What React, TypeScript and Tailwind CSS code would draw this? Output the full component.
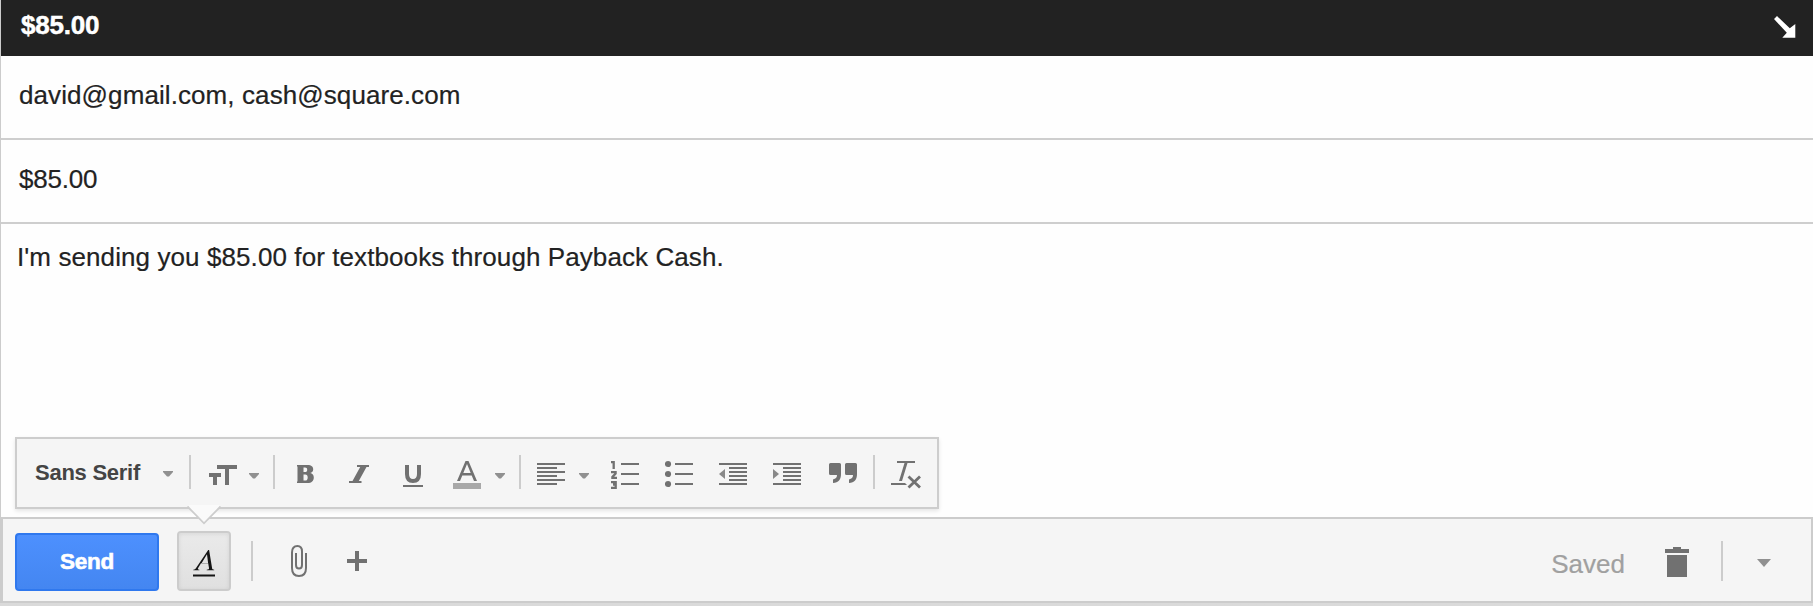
import type { ReactNode } from "react";

const INK = "#717171";

function Icon({ w, className, children }: { w: number; className: string; children: ReactNode }) {
  return (
    <svg width={w} height={34} viewBox={`0 0 ${w} 34`} className={`shrink-0 ${className}`} fill={INK}>
      {children}
    </svg>
  );
}

function Caret({ className, raised = false }: { className: string; raised?: boolean }) {
  return (
    <Icon w={10} className={className}>
      <path d={raised ? "M0 16h10v1l-4 4.500h-2L0 17z" : "M0 18h10v1l-4 4.500h-2L0 19z"} fill="#909090" />
    </Icon>
  );
}

function Rule({ className }: { className: string }) {
  return <span className={`block w-[2px] shrink-0 bg-[#cccccc] ${className}`} />;
}

function FormatBar() {
  return (
    <div className="relative ml-[14px] flex h-[72px] w-[924px] items-start border-2 border-[#cdcdcd] bg-[#f5f5f5] pt-[16px] shadow-[0_2px_4px_rgba(0,0,0,0.1)]">
      <span className="ml-[18px] mt-[1px] w-[106px] shrink-0 whitespace-nowrap text-[22px] font-bold leading-[34px] tracking-[-0.26px] text-[#444444]">
        Sans Serif
      </span>
      <Caret className="ml-[22px]" raised />
      <Rule className="ml-[16px] h-[34px]" />
      <Icon w={28} className="ml-[18px]">
        <path d="M8 10h20v4h-8v16h-4V14H8zM0 18h12v4H8v8H4v-8H0z" />
      </Icon>
      <Caret className="ml-[12px]" />
      <Rule className="ml-[14px] h-[34px]" />
      <Icon w={17} className="ml-[22px]">
        <path fillRule="evenodd" d="M0 10h10.500C14.500 10 16.200 11.700 16.200 14.200c0 2-1.200 3.400-3 3.900 2.200.500 3.600 2 3.600 4.400 0 3.500-2.200 5.500-6.200 5.500H0v-1.600h.500V11.600H0zM6.500 12.400v4.600h1.500c1.500 0 2.200-.800 2.200-2.300s-.700-2.300-2.200-2.300zM6.500 19.400v6.200h1.700c1.700 0 2.500-1 2.500-3.100s-.800-3.100-2.500-3.100z" />
      </Icon>
      <Icon w={20} className="ml-[35px]">
        <path d="M8 10H20v2h-2.500L9.800 26h2.700v2H0v-2h3.500l7.700-14H8z" />
      </Icon>
      <Icon w={20} className="ml-[34px]">
        <path d="M4 10v9c0 4.500 2 7 6 7s6-2.500 6-7v-9" fill="none" stroke={INK} strokeWidth="4" />
        <path d="M0 30h20v2H0z" />
      </Icon>
      <Icon w={28} className="ml-[30px]">
        <path fillRule="evenodd" d="M12.500 6h3L24 26h-3l-2.300-5.500H9.300L7 26H4zM14 9l-3.700 9h7.400z" />
        <path d="M0 28h28v6H0z" fill="#a8a8a8" />
      </Icon>
      <Caret className="ml-[14px]" />
      <Rule className="ml-[14px] h-[34px]" />
      <Icon w={28} className="ml-[16px]">
        <path d="M0 8h28v2H0zM0 12h20v2H0zM0 16h28v2H0zM0 20h20v2H0zM0 24h28v2H0zM0 28h20v2H0z" />
      </Icon>
      <Caret className="ml-[14px]" />
      <Icon w={28} className="ml-[22px]">
        <path d="M10 8h18v2H10zM10 18h18v2H10zM10 28h18v2H10z" />
        <path d="M0 7.200h2.700V14M0 17.200h4.600v1.300L1.400 21.900v.900H6M0 27.200h4.700v2.300H2h2.700v3.300H0" fill="none" stroke={INK} strokeWidth="2.300" />
      </Icon>
      <Icon w={28} className="ml-[26px]">
        <circle cx="3" cy="9" r="3.100" />
        <circle cx="3" cy="19" r="3.100" />
        <circle cx="3" cy="29" r="3.100" />
        <path d="M10 8h18v2H10zM10 18h18v2H10zM10 28h18v2H10z" />
      </Icon>
      <Icon w={28} className="ml-[26px]">
        <path d="M0 8h28v2H0zM10 12h18v2H10zM10 16h18v2H10zM10 20h18v2H10zM10 24h18v2H10zM0 28h28v2H0z" />
        <path d="M6 14v10l-6-5z" fill="#888888" />
      </Icon>
      <Icon w={28} className="ml-[26px]">
        <path d="M0 8h28v2H0zM10 12h18v2H10zM10 16h18v2H10zM10 20h18v2H10zM10 24h18v2H10zM0 28h28v2H0z" />
        <path d="M0 14v10l6-5z" fill="#888888" />
      </Icon>
      <Icon w={28} className="ml-[28px]">
        <path d="M1.500 8h9Q12 8 12 9.500V19c0 5.500-2.500 9-8 9v-3.600c2.700-.500 4-2 4-4.400H1.500Q0 20 0 18.500v-9Q0 8 1.500 8z" />
        <path d="M17.500 8h9Q28 8 28 9.500V19c0 5.500-2.500 9-8 9v-3.600c2.700-.500 4-2 4-4.400h-6.500Q16 20 16 18.500v-9Q16 8 17.500 8z" />
      </Icon>
      <Rule className="ml-[16px] h-[34px]" />
      <Icon w={31} className="ml-[16px]">
        <path d="M6 6h18v2H6zM0 28h14l2 2H0zM13.500 8h3L11 26H8z" />
        <path d="M17.500 21.500l11.500 11M29 21.500l-11.500 11" fill="none" stroke={INK} strokeWidth="2.800" />
      </Icon>
      <svg width="34" height="20" viewBox="0 0 34 20" className="absolute left-[170px] top-[66px] z-10">
        <path d="M1 0h32v2L17 19 1 2z" fill="#fafafa" />
        <path d="M0.500 1.500L17 18.300 33.500 1.500" fill="none" stroke="#cdcdcd" strokeWidth="1.800" />
      </svg>
    </div>
  );
}

function ActionBar() {
  return (
    <footer className="flex h-[86px] items-start border-2 border-[#cccccc] bg-[#f5f5f5] pl-[12px]">
      <button className="mt-[14px] h-[58px] w-[144px] shrink-0 rounded-[4px] border-2 border-[#2f78ee] bg-linear-to-b from-[#4d90fe] to-[#4486f1] text-[22.500px] font-bold leading-[54px] tracking-[-0.3px] text-white [-webkit-text-stroke:0.600px_white]">
        <span className="block h-[54px] leading-[53px]">Send</span>
      </button>
      <button className="ml-[18px] mt-[12px] flex h-[60px] w-[54px] shrink-0 items-start justify-center rounded-[4px] border-2 border-[#cccccc] bg-linear-to-b from-[#eaeaea] to-[#e0e0e0] pt-[16px] shadow-[inset_0_1px_4px_rgba(0,0,0,0.08)]">
        <svg width="22" height="28" viewBox="0 0 22 28" fill="#151515">
          <path fillRule="evenodd" d="M15.200 1h.900l3 18.200c.200 1 .600 1.300 2.100 1.500v.600h-7.500v-.600c1.900-.100 2.500-.500 2.300-1.700l-.800-4.800H8l-2.700 4.500c-.900 1.500-.500 1.900 1.100 2v.600H.300v-.600c1.400-.200 2.100-.700 3.100-2.300zM14 5.200l-5.300 8.900h6.400z" />
          <path d="M0 25.500h22v2H0z" />
        </svg>
      </button>
      <Rule className="ml-[20px] mt-[22px] h-[40px]" />
      <svg width="16" height="32" viewBox="0 0 16 32" className="ml-[38px] mt-[26px] shrink-0" fill="none" stroke={INK} strokeWidth="2">
        <path d="M15 8v15c0 5-2.500 8-7 8s-7-3-7-8V7.500C1 3.500 2.800 1 6.500 1S11 3 11 6.500V20c0 2.500-1 3.500-3 3.500S5 22.500 5 20V8" />
      </svg>
      <svg width="20" height="20" viewBox="0 0 20 20" className="ml-[40px] mt-[32px] shrink-0" fill={INK}>
        <path d="M8 0h4v8h8v4h-8v8H8v-8H0V8h8z" />
      </svg>
      <span className="ml-auto mt-[29px] whitespace-nowrap text-[26px] leading-[32px] text-[#a0a0a0] [-webkit-text-stroke:0.200px_#a0a0a0]">
        Saved
      </span>
      <svg width="24" height="30" viewBox="0 0 24 30" className="ml-[40px] mt-[28px] shrink-0" fill={INK}>
        <path d="M8 0h8v2h8v4H0V2h8zM2 8h20v22H2z" />
      </svg>
      <Rule className="ml-[32px] mt-[22px] h-[40px]" />
      <svg width="14" height="8" viewBox="0 0 14 8" className="ml-[34px] mr-[40px] mt-[40px] shrink-0" fill="#909090">
        <path d="M0 0h14L7 8z" />
      </svg>
    </footer>
  );
}

export default function App() {
  return (
    <div className="h-[606px] w-[1813px] overflow-hidden bg-linear-to-b from-[#d4d4d4] to-[#dadada] font-['Liberation_Sans',Arial,sans-serif] text-[#222222]">
      <div className="flex h-[603px] flex-col border-l border-[#cccccc] bg-[#fefefe]">
        <header className="flex h-[56px] shrink-0 items-start justify-between bg-[#222222] pl-[20px] pr-[17px]">
          <h1 className="mt-[9px] text-[26px] font-bold leading-[32px] tracking-[-0.2px] text-white [-webkit-text-stroke:0.500px_white]">
            $85.00
          </h1>
          <svg width="22" height="22" viewBox="0 0 22 22" className="mt-[16px]" fill="#ffffff">
            <path d="M3 0L15.800 12.300l5.500-4.300V21.800H8.300l4.500-5L0 3z" />
          </svg>
        </header>
        <div className="h-[84px] shrink-0 border-b-2 border-[#cecece] pl-[18px] pt-[23px] text-[26px] leading-[32px] tracking-[0.09px] [-webkit-text-stroke:0.200px_#222222]">
          david@gmail.com, cash@square.com
        </div>
        <div className="h-[84px] shrink-0 border-b-2 border-[#cecece] pl-[18px] pt-[23px] text-[26px] leading-[32px] tracking-[-0.2px] [-webkit-text-stroke:0.200px_#222222]">
          $85.00
        </div>
        <main className="flex h-[293px] shrink-0 flex-col justify-between pb-[8px]">
          <p className="pl-[16px] pt-[17px] text-[26px] leading-[32px] tracking-[0.09px] [-webkit-text-stroke:0.200px_#222222]">
            I'm sending you $85.00 for textbooks through Payback Cash.
          </p>
          <FormatBar />
        </main>
        <ActionBar />
      </div>
    </div>
  );
}
